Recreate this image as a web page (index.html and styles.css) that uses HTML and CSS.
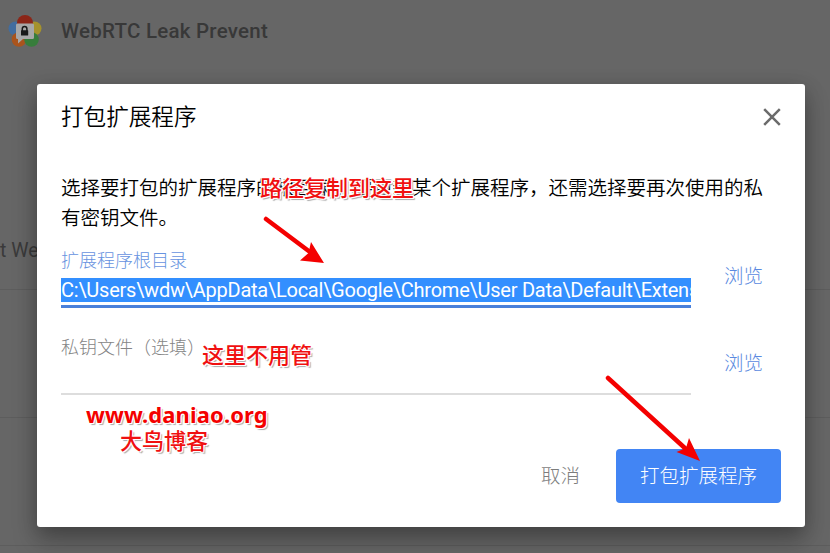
FILE: index.html
```html
<!DOCTYPE html>
<html lang="zh-CN">
<head>
<meta charset="utf-8">
<title>打包扩展程序</title>
<link rel="stylesheet" href="styles.css">
</head>
<body>
<div class="page">
  <header class="ext-head">
    <svg class="ext-icon" width="34" height="34" viewBox="0 0 34 34">
      <circle cx="7.500" cy="14.500" r="7" fill="#426d9f"/>
      <circle cx="26.500" cy="14.500" r="7" fill="#a5922c"/>
      <circle cx="11" cy="25.500" r="7.300" fill="#a9541d"/>
      <circle cx="23.500" cy="25.500" r="7.300" fill="#377d3b"/>
      <circle cx="17" cy="9" r="8" fill="#8c2618"/>
      <path d="M9.500 9.500h15a1.500 1.500 0 0 1 1.500 1.500v12.500a1.500 1.500 0 0 1-1.500 1.500H15l-5 4.500V25H9.500A1.500 1.500 0 0 1 8 23.500V11a1.500 1.500 0 0 1 1.500-1.500z" fill="#a8a8a8"/>
      <path d="M14.300 17v-2.300a2.300 2.300 0 0 1 4.600 0V17" fill="none" stroke="#191919" stroke-width="1.500"/>
      <rect x="13" y="16.300" width="7.200" height="5.200" rx=".5" fill="#191919"/>
    </svg>
    <span class="ext-name">WebRTC Leak Prevent</span>
  </header>
  <div class="row row-first">t WebRTC</div>
  <div class="row"></div>
  <div class="row"></div>
</div>
<main class="dialog">
  <div class="title-bar">
    <h1>打包扩展程序</h1>
    <svg class="close" width="18" height="18" viewBox="0 0 18 18"><path d="M1.200 1.200l15.600 15.600M16.800 1.200L1.200 16.800" stroke="#6b6b6b" stroke-width="2.500"/></svg>
  </div>
  <p class="intro">选择要打包的扩展程序的根目录。要更新某个扩展程序，还需选择要再次使用的私有密钥文件。</p>
  <div class="field">
    <div class="input">
      <div class="label active">扩展程序根目录</div>
      <div class="value">C:\Users\wdw\AppData\Local\Google\Chrome\User Data\Default\Extensions</div>
      <div class="underline"></div>
    </div>
    <a class="browse">浏览</a>
  </div>
  <div class="field second">
    <div class="input">
      <div class="label">私钥文件（选填）</div>
      <div class="empty"></div>
    </div>
    <a class="browse">浏览</a>
  </div>
  <div class="actions">
    <span class="cancel">取消</span>
    <span class="submit">打包扩展程序</span>
  </div>
</main>
<div class="note note-path">路径复制到这里</div>
<div class="note note-skip">这里不用管</div>
<div class="note note-site">www.daniao.org</div>
<div class="note note-blog">大鸟博客</div>
<svg class="arrows" width="830" height="553" viewBox="0 0 830 553">
  <g stroke="#f40000" stroke-width="4.500" stroke-linecap="round"><path d="M266 219L310 252M608 378L687 450"/></g>
  <g fill="#f40000"><path d="M324 263L300 260.500L308.500 253L311 242Z"/><path d="M700 461L676.500 452L686 448L689 438Z"/></g>
</svg>
</body>
</html>
```

FILE: styles.css
```css
* { box-sizing: border-box; }
body {
  margin: 0;
  width: 830px;
  height: 553px;
  overflow: hidden;
  position: relative;
  background: #666;
  font-family: Roboto, "Noto Sans CJK SC", sans-serif;
}
.page { height: 553px; }
.ext-head {
  display: flex;
  align-items: center;
  height: 61px;
  padding-left: 8px;
  gap: 19px;
}
.ext-icon { flex: none; }
.ext-name { font-size: 20.5px; font-weight: 500; letter-spacing: .25px; color: #383838; }
.row { height: 128px; border-bottom: 1px solid #5d5d5d; }
.row-first {
  height: 229px;
  padding-top: 176px;
  font-size: 19.5px;
  line-height: 27px;
  color: #3a3a3a;
}
.dialog {
  position: absolute;
  left: 37px;
  top: 84px;
  width: 768px;
  height: 443px;
  padding: 18px 24px 24px;
  display: flex;
  flex-direction: column;
  background: #fff;
  border-radius: 3px;
  box-shadow: 0 14px 24px rgba(0, 0, 0, .25), 0 4px 20px rgba(0, 0, 0, .18);
}
.title-bar { display: flex; align-items: center; justify-content: space-between; height: 32px; }
h1 { margin: 0; font-size: 22.6px; font-weight: 350; line-height: 32px; color: #000; }
.close { margin-bottom: 2px; }
.intro {
  margin: 40px 0 0;
  font-size: 19.5px;
  line-height: 30px;
  font-weight: 350;
  color: #000;
  word-break: break-all;
}
.field { display: flex; align-items: flex-start; height: 75px; margin-top: 15px; }
.input { width: 630px; overflow: hidden; }
.label { font-size: 18px; font-weight: 300; line-height: 24px; color: #858585; white-space: nowrap; }
.label.active { color: #6793e0; }
.value {
  height: 24px;
  margin-top: 5px;
  line-height: 24px;
  font-size: 20px;
  letter-spacing: -.24px;
  color: #fff;
  background: #338fff;
  white-space: nowrap;
  overflow: hidden;
}
.underline { height: 3px; margin-top: 3px; background: #4a80da; }
.browse {
  margin: 14px 0 0 33px;
  font-size: 19.5px;
  line-height: 28px;
  font-weight: 300;
  color: #5b8ae0;
}
.second { margin-top: 12px; }
.empty { height: 35px; border-bottom: 2px solid #ddd; }
.actions {
  display: flex;
  align-items: center;
  justify-content: flex-end;
  gap: 36px;
  margin-top: auto;
  font-size: 19.5px;
  font-weight: 300;
}
.cancel { color: #7d7d7d; padding-bottom: 3px; }
.submit {
  width: 165px;
  height: 54px;
  padding-top: 1px;
  line-height: 54px;
  text-align: center;
  color: #fff;
  background: #4285f4;
  border-radius: 4px;
}
.note {
  position: absolute;
  font-size: 22px;
  line-height: 30px;
  font-weight: 500;
  color: #f01010;
  white-space: nowrap;
  text-shadow: -1px -1px #fff, 1px -1px #fff, -1px 1px #fff, 1px 1px #fff, 2px 2px 1px #aaa;
}
.note-path { left: 260px; top: 174px; }
.note-skip { left: 202px; top: 341px; }
.note-site { left: 86px; top: 399px; font-family: "Noto Sans", sans-serif; font-weight: 700; letter-spacing: .12px; color: #f40000; }
.note-blog { left: 120px; top: 427px; }
.arrows { position: absolute; left: 0; top: 0; }
```
